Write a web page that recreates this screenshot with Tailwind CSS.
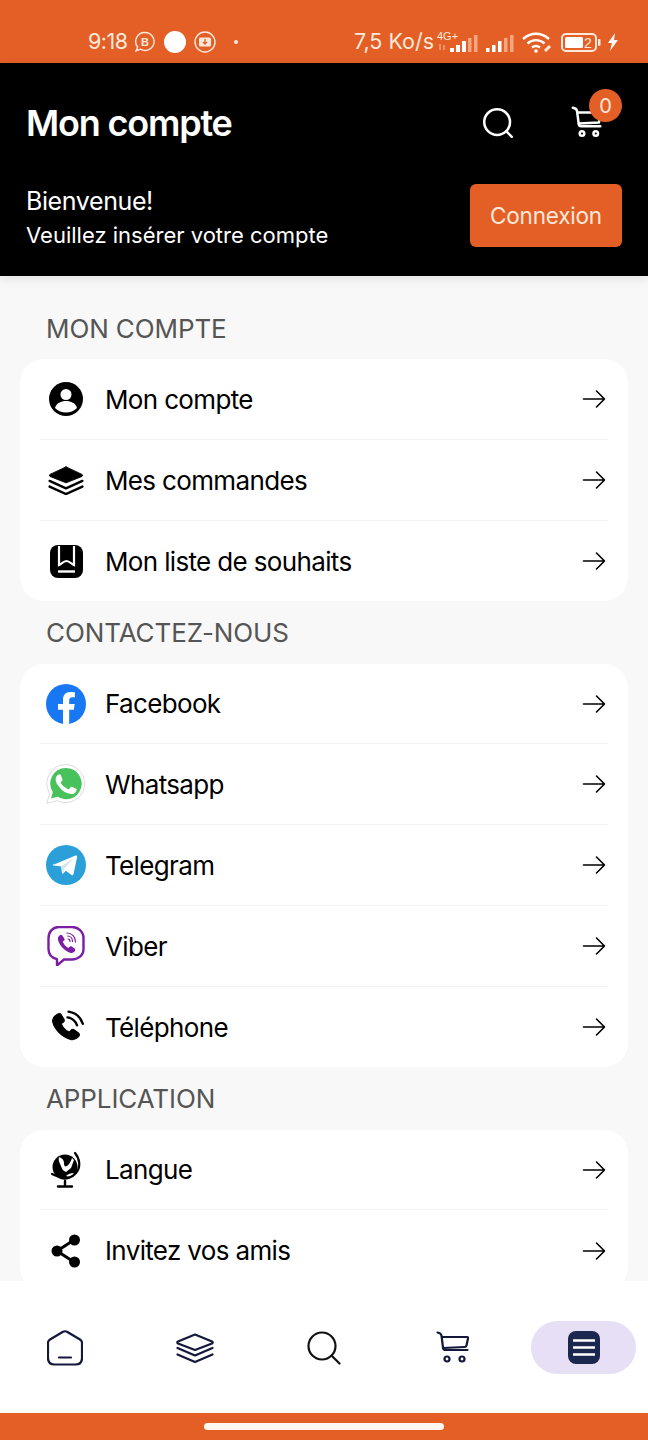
<!doctype html>
<html><head><meta charset="utf-8"><script src="https://cdn.jsdelivr.net/npm/@tailwindcss/browser@4"></script></head>
<body class="m-0">
<div class="w-[648px] h-[1440px] flex flex-col overflow-hidden bg-[#f8f8f8] font-['Inter','Liberation_Sans',sans-serif] text-black">
  <!-- status bar -->
  <div class="h-[63px] shrink-0 bg-[#e35f26] text-[#fde9dc] flex items-end pb-[9px]">
    <div class="ml-[88px] flex items-center w-[266px] h-[24px]">
      <span class="text-[21.5px] leading-none tracking-[-0.5px] w-[46px]">9:18</span>
      <svg class="w-[22px] h-[22px]" viewBox="0 0 22 22" fill="none" stroke="#fde9dc" stroke-width="1.4"><path d="M11 1.500a9 9 0 1 1-4.600 16.700L2 20l1.600-4A9 9 0 0 1 11 1.500Z"/><text x="11" y="15" font-size="11" font-weight="700" text-anchor="middle" fill="#fde9dc" stroke="none" font-family="Liberation Sans">B</text></svg>
      <span class="w-[22px] h-[22px] rounded-full bg-white ml-[8px]"></span>
      <svg class="w-[22px] h-[22px] ml-[8px]" viewBox="0 0 22 22" fill="none" stroke="#fde9dc" stroke-width="1.4"><circle cx="11" cy="11" r="10"/><rect x="5" y="6.500" width="12" height="9" rx="1.500" fill="#fde9dc" stroke="none"/><path d="M11 8v4.500M9 11l2 2 2-2" stroke="#e35f26" stroke-width="1.300"/></svg>
      <span class="w-[4px] h-[4px] rounded-full bg-[#fde9dc] ml-[18px]"></span>
    </div>
    <div class="flex items-center h-[24px]">
      <span class="text-[21.5px] leading-none tracking-[0px] w-[83px] whitespace-nowrap">7,5 Ko/s</span>
      <svg class="w-[41px] h-[24px]" viewBox="0 0 41 24"><text x="0" y="10" font-size="11" fill="#fde9dc" font-family="Liberation Sans">4G+</text><path d="M3 14v6M7 20v-5" stroke="#f5a67f" stroke-width="1.400"/><rect x="13" y="18" width="4" height="4" fill="#fff"/><rect x="19" y="15" width="4" height="7" fill="#fff"/><rect x="25" y="11" width="4" height="11" fill="#fff"/><rect x="31" y="8" width="3.500" height="14" fill="#f5a67f"/><rect x="37" y="5" width="3.500" height="17" fill="#f5a67f"/></svg>
      <svg class="w-[28px] h-[24px] ml-[8px]" viewBox="0 0 28 24"><rect x="0" y="18" width="3.500" height="4" fill="#fff"/><rect x="6" y="15" width="3.500" height="7" fill="#fff"/><rect x="12" y="11" width="3.500" height="11" fill="#fff"/><rect x="18" y="8" width="3.500" height="14" fill="#f5a67f"/><rect x="24" y="5" width="3.500" height="17" fill="#f5a67f"/></svg>
      <svg class="w-[32px] h-[24px] ml-[8px]" viewBox="0 0 32 24" fill="none" stroke="#fff" stroke-width="2.400"><path d="M1 9c8-7 18-7 26 0M5.500 13.500c5-4.500 12-4.500 17 0M10 17.500c2.500-2 5.500-2 8 0"/><circle cx="14" cy="21" r="1.800" fill="#fff" stroke="none"/><path d="M23 21l5-5" stroke="#fde9dc" stroke-width="3"/></svg>
      <svg class="w-[44px] h-[24px] ml-[7px]" viewBox="0 0 44 24" fill="none"><rect x="1" y="4" width="34" height="17" rx="4" stroke="#fde9dc" stroke-width="2"/><rect x="4" y="7" width="18" height="11" rx="1.500" fill="#fff"/><rect x="37" y="9" width="2.500" height="7" rx="1" fill="#fde9dc"/><text x="23" y="18" font-size="14" fill="#fde9dc" font-family="Liberation Sans">2</text></svg>
      <svg class="w-[12px] h-[20px] ml-[2px]" viewBox="0 0 12 20" fill="#fff"><path d="M8 1 1 11h4l-2 8 8-11H7l1-7Z"/></svg>
    </div>
  </div>
  <!-- header -->
  <header class="h-[213px] shrink-0 bg-black text-white pl-[26px] pr-[26px] flex flex-col shadow-[0_4px_10px_rgba(0,0,0,0.08)] relative z-10">
    <div class="h-[121px] pb-[2px] flex items-center justify-between">
      <h1 class="text-[36px] font-semibold tracking-[-1.2px] leading-none">Mon compte</h1>
      <div class="flex items-center">
        <svg class="w-[32px] h-[32px]" viewBox="0 0 36 36" fill="none" stroke="#fff" stroke-width="2.800" stroke-linecap="round"><circle cx="17" cy="17" r="14.500"/><path d="m27.500 27.500 6 6"/></svg>
        <div class="relative ml-[57px] mr-[18px] w-[33px] h-[33px]">
          <svg class="w-[33px] h-[33px]" viewBox="0 0 36 36" fill="none" stroke="#fff" stroke-width="2.700" stroke-linecap="round" stroke-linejoin="round"><path d="M2 2c2 .4 4 1 4.500 3l2 15c.2 1.500 1 2 2.500 2h21"/><path d="M7 7h25l-1.500 11-22 1"/><circle cx="12" cy="30" r="2.500"/><circle cx="27" cy="30" r="2.500"/></svg>
          <span class="absolute left-[18px] top-[-17px] w-[33px] h-[33px] rounded-full bg-[#e35f26] text-[#fde9dc] text-[20px] flex items-center justify-center">0</span>
        </div>
      </div>
    </div>
    <div class="flex items-start justify-between">
      <div>
        <p class="text-[25px] leading-[34px] tracking-[-0.4px]">Bienvenue!</p>
        <p class="text-[22px] leading-[34px] tracking-[0px] whitespace-nowrap">Veuillez insérer votre compte</p>
      </div>
      <button class="w-[152px] h-[63px] rounded-[6px] bg-[#e35f26] text-[#fde9dc] text-[22.5px] tracking-[-0.2px] flex items-center justify-center">Connexion</button>
    </div>
  </header>
  <!-- content -->
  <main class="flex-1 min-h-0 overflow-hidden px-[20px] pt-[36px]">
    <h2 class="h-[47px] pl-[26px] text-[26px] leading-[34px] tracking-[-0.1px] text-[#555]">MON COMPTE</h2>
    <section class="bg-white rounded-[24px] px-[20px]">
      <div class="h-[81px] flex items-center border-b border-[#f4f4f4]">
        <span class="w-[52px] flex justify-center mr-[13px]"><svg class="w-[36px] h-[36px]" viewBox="0 0 36 36"><circle cx="18" cy="18" r="17"/><circle cx="18" cy="13.500" r="5.500" fill="#fff"/><path d="M7 27c1.500-5 6-7 11-7s9.500 2 11 7c-3 3-7 4.500-11 4.500S10 30 7 27Z" fill="#fff"/></svg></span>
        <span class="flex-1 text-[26px] tracking-[-0.65px]">Mon compte</span>
        <svg class="w-[24px] h-[20px] mr-[2px]" viewBox="0 0 24 20" fill="none" stroke="#000" stroke-width="1.600" stroke-linecap="round" stroke-linejoin="round"><path d="M1.500 10h21M14.500 2l8 8-8 8"/></svg>
      </div>
      <div class="h-[81px] flex items-center border-b border-[#f4f4f4]">
        <span class="w-[52px] flex justify-center mr-[13px]"><svg class="w-[38px] h-[30px]" viewBox="0 0 38 32" fill="none" stroke="#000" stroke-width="2.500" stroke-linecap="round" stroke-linejoin="round"><path d="M19 2 36 10c1 .6 1 1.600 0 2.200L19 19 2 12.200c-1-.6-1-1.600 0-2.200L19 2Z" fill="#000" stroke-width="1"/><path d="M1.500 17 19 25l17.500-8M1.500 23 19 31l17.500-8"/></svg></span>
        <span class="flex-1 text-[26px] tracking-[-0.65px]">Mes commandes</span>
        <svg class="w-[24px] h-[20px] mr-[2px]" viewBox="0 0 24 20" fill="none" stroke="#000" stroke-width="1.600" stroke-linecap="round" stroke-linejoin="round"><path d="M1.500 10h21M14.500 2l8 8-8 8"/></svg>
      </div>
      <div class="h-[80px] flex items-center">
        <span class="w-[52px] flex justify-center mr-[13px]"><svg class="w-[33px] h-[33px]" viewBox="0 0 33 33" fill="none"><rect width="33" height="33" rx="8" fill="#000"/><path d="M9 1v19c2-1 5-4 7.500-4s5.500 3 7.500 4V1" stroke="#fff" stroke-width="2.200"/><path d="M8 26.500h17" stroke="#fff" stroke-width="2.400"/></svg></span>
        <span class="flex-1 text-[26px] tracking-[-0.65px]">Mon liste de souhaits</span>
        <svg class="w-[24px] h-[20px] mr-[2px]" viewBox="0 0 24 20" fill="none" stroke="#000" stroke-width="1.600" stroke-linecap="round" stroke-linejoin="round"><path d="M1.500 10h21M14.500 2l8 8-8 8"/></svg>
      </div>
    </section>
    <h2 class="h-[63px] pl-[26px] pt-[15px] text-[26px] leading-[34px] tracking-[-0.1px] text-[#555]">CONTACTEZ-NOUS</h2>
    <section class="bg-white rounded-[24px] px-[20px]">
      <div class="h-[80px] flex items-center border-b border-[#f4f4f4]">
        <span class="w-[52px] flex justify-center mr-[13px]"><svg class="w-[40px] h-[40px]" viewBox="0 0 40 40"><circle cx="20" cy="20" r="20" fill="#1877f2"/><path d="M27.800 25.800l.9-5.800h-5.500v-3.700c0-1.600.8-3.100 3.200-3.100h2.500V8.300s-2.300-.4-4.400-.4c-4.500 0-7.500 2.700-7.500 7.700V20h-5v5.800h5v14a20 20 0 0 0 6.200 0v-14h4.600Z" fill="#fff"/></svg></span>
        <span class="flex-1 text-[26px] tracking-[-0.65px]">Facebook</span>
        <svg class="w-[24px] h-[20px] mr-[2px]" viewBox="0 0 24 20" fill="none" stroke="#000" stroke-width="1.600" stroke-linecap="round" stroke-linejoin="round"><path d="M1.500 10h21M14.500 2l8 8-8 8"/></svg>
      </div>
      <div class="h-[81px] flex items-center border-b border-[#f4f4f4]">
        <span class="w-[52px] flex justify-center mr-[13px]"><svg class="w-[40px] h-[40px]" viewBox="0 0 40 40"><path d="M20 .6a19 19 0 0 0-16.400 28.700L.8 39.400l10.500-2.700A19 19 0 1 0 20 .6Z" fill="#fff" stroke="#dcdcdc" stroke-width="1"/><path d="M20 4a15.600 15.600 0 0 0-13.200 24l-1.800 6.600 6.800-1.800A15.600 15.600 0 1 0 20 4Z" fill="#48c35b"/><path d="M15 11.500c-.4-.9-.8-.9-1.200-.9h-1c-.4 0-.9.100-1.400.7-.5.500-1.800 1.800-1.800 4.300s1.800 5 2.100 5.300c.3.400 3.600 5.700 8.900 7.800 4.400 1.700 5.300 1.400 6.200 1.300 1-.1 3-1.200 3.400-2.400.4-1.200.4-2.200.3-2.400-.1-.2-.5-.3-1-.6l-3.600-1.800c-.5-.2-.8-.3-1.200.2l-1.600 2c-.3.400-.6.400-1.100.2-.5-.3-2.200-.8-4.200-2.600-1.600-1.400-2.600-3.100-2.900-3.600-.3-.5 0-.8.200-1l.8-.9c.2-.3.300-.5.500-.8.200-.3.100-.6 0-.9L15 11.500Z" fill="#fff"/></svg></span>
        <span class="flex-1 text-[26px] tracking-[-0.65px]">Whatsapp</span>
        <svg class="w-[24px] h-[20px] mr-[2px]" viewBox="0 0 24 20" fill="none" stroke="#000" stroke-width="1.600" stroke-linecap="round" stroke-linejoin="round"><path d="M1.500 10h21M14.500 2l8 8-8 8"/></svg>
      </div>
      <div class="h-[81px] flex items-center border-b border-[#f4f4f4]">
        <span class="w-[52px] flex justify-center mr-[13px]"><svg class="w-[40px] h-[40px]" viewBox="0 0 40 40"><circle cx="20" cy="20" r="20" fill="#2a9fd8"/><path d="M7.500 19.800 29.500 10.500c1-.4 1.900.2 1.600 1.700L27.500 29c-.3 1.200-1 1.500-2 .9l-5.600-4.100-2.700 2.600c-.6.600-1.100.3-1.200-.5l-1-6.500-7.400-.9c-1.100-.3-1.100-1.200-.1-1.700Z" fill="#fff"/><path d="M15 21.500 28 13l-9.500 10.500-1.300 5" fill="#d2e6f2"/></svg></span>
        <span class="flex-1 text-[26px] tracking-[-0.65px]">Telegram</span>
        <svg class="w-[24px] h-[20px] mr-[2px]" viewBox="0 0 24 20" fill="none" stroke="#000" stroke-width="1.600" stroke-linecap="round" stroke-linejoin="round"><path d="M1.500 10h21M14.500 2l8 8-8 8"/></svg>
      </div>
      <div class="h-[81px] flex items-center border-b border-[#f4f4f4]">
        <span class="w-[52px] flex justify-center mr-[13px]"><svg class="w-[38px] h-[40px]" viewBox="0 0 38 40" fill="none"><path d="M12 1h13c6 0 11.500 4.500 11.500 11v11c0 6.500-5.500 10.500-11.500 10.500h-8L10 39.500v-6.300C5 32 1.500 28.500 1.500 23V12C1.500 5.500 6 1 12 1Z" stroke="#7a1fa2" stroke-width="2.400" stroke-linejoin="round"/><path d="M12.500 9.500c1-.9 2.200-.8 2.800.1l2 2.800c.6.900.3 1.800-.5 2.400l-1 .8c.6 2.400 3 5.400 5.600 6.400l.9-1.100c.7-.8 1.600-.9 2.500-.3l2.700 2c1 .7 1 2 .1 3-1.300 1.300-2.900 1.800-4.600 1.100-6.300-2.700-10.300-7-12-13-.3-1.800.4-3.200 1.500-4.200Z" fill="#7a1fa2"/><path d="M20 7c4.500 0 8.500 3.500 8.500 9M20.500 10c3 0 5 2.500 5 5.500M21 13c1.500 0 2 1 2 2.500" stroke="#7a1fa2" stroke-width="1.200" stroke-linecap="round"/></svg></span>
        <span class="flex-1 text-[26px] tracking-[-0.65px]">Viber</span>
        <svg class="w-[24px] h-[20px] mr-[2px]" viewBox="0 0 24 20" fill="none" stroke="#000" stroke-width="1.600" stroke-linecap="round" stroke-linejoin="round"><path d="M1.500 10h21M14.500 2l8 8-8 8"/></svg>
      </div>
      <div class="h-[80px] flex items-center">
        <span class="w-[52px] flex justify-center mr-[13px]"><svg class="w-[34px] h-[34px] translate-x-[2px]" viewBox="0 0 32 32" fill="none"><path d="M6 4c1.400-1 2.800-.8 3.500.3l2.600 4.200c.7 1.100.4 2.200-.6 3l-1.800 1.300c1 3.300 3.800 6.300 7.600 8l1.500-1.700c.9-1 2-1.200 3.100-.4l3.900 2.800c1.200.9 1.200 2.400.2 3.500-1.800 2-4.400 3.500-7.600 2.700C9.500 25 3 17.500 1.500 11 1 8 3.500 5.500 6 4Z" fill="#000" stroke="#000" stroke-width="1"/><path d="M16.500 1.500c6.500 1 11.500 5.500 13.500 11.500M15.500 7c4 .5 7.500 3.500 9 7.500" stroke="#000" stroke-width="2.200" stroke-linecap="round"/></svg></span>
        <span class="flex-1 text-[26px] tracking-[-0.65px]">Téléphone</span>
        <svg class="w-[24px] h-[20px] mr-[2px]" viewBox="0 0 24 20" fill="none" stroke="#000" stroke-width="1.600" stroke-linecap="round" stroke-linejoin="round"><path d="M1.500 10h21M14.500 2l8 8-8 8"/></svg>
      </div>
    </section>
    <h2 class="h-[63px] pl-[26px] pt-[15px] text-[26px] leading-[34px] tracking-[-0.1px] text-[#555]">APPLICATION</h2>
    <section class="bg-white rounded-[24px] px-[20px]">
      <div class="h-[80px] flex items-center border-b border-[#f4f4f4]">
        <span class="w-[52px] flex justify-center mr-[13px]"><svg class="w-[34px] h-[38px]" viewBox="0 0 34 38" fill="none"><circle cx="16" cy="16" r="12.500" fill="#000"/><path d="M10 6c3 1 5 3 5 6s1 4 3 3 4-5 5-8l2 2-3 8-5 4c-3-1-4-3-5-6s-3-5-2-9ZM17 25c2-2 5-3 8-3-1 3-5 4-8 3Z" fill="#fff"/><path d="M26 2c5 6 6 14 1 20-4 5-11 7-17 4l-7-3" stroke="#000" stroke-width="2.200" stroke-linecap="round"/><path d="M16 30v4M9 35.500h14" stroke="#000" stroke-width="2.400" stroke-linecap="round"/></svg></span>
        <span class="flex-1 text-[26px] tracking-[-0.65px]">Langue</span>
        <svg class="w-[24px] h-[20px] mr-[2px]" viewBox="0 0 24 20" fill="none" stroke="#000" stroke-width="1.600" stroke-linecap="round" stroke-linejoin="round"><path d="M1.500 10h21M14.500 2l8 8-8 8"/></svg>
      </div>
      <div class="h-[81px] flex items-center">
        <span class="w-[52px] flex justify-center mr-[13px]"><svg class="w-[30px] h-[34px]" viewBox="0 0 30 34" fill="none"><path d="M6 17 23 6M6 17l17 11" stroke="#000" stroke-width="3"/><circle cx="6" cy="17" r="5.500" fill="#000"/><circle cx="23.500" cy="6" r="5.500" fill="#000"/><circle cx="23.500" cy="28" r="5.500" fill="#000"/></svg></span>
        <span class="flex-1 text-[26px] tracking-[-0.65px]">Invitez vos amis</span>
        <svg class="w-[24px] h-[20px] mr-[2px]" viewBox="0 0 24 20" fill="none" stroke="#000" stroke-width="1.600" stroke-linecap="round" stroke-linejoin="round"><path d="M1.500 10h21M14.500 2l8 8-8 8"/></svg>
      </div>
    </section>
  </main>
  <!-- bottom nav -->
  <nav class="h-[132px] shrink-0 bg-white grid grid-cols-[130px_129px_129px_129px_1fr] items-center justify-items-center pt-[1px]">
    <svg class="w-[36px] h-[36px]" viewBox="0 0 36 36" fill="none" stroke="#14183a" stroke-width="2.200" stroke-linecap="round" stroke-linejoin="round"><path d="M16 1.700 3 9.500c-1.300.8-2 1.800-2 3.200V28c0 4 2.500 6.500 6.500 6.500h21c4 0 6.500-2.500 6.500-6.500V12.700c0-1.400-.7-2.400-2-3.200L20 1.700c-1.500-.7-2.500-.7-4 0Z"/><path d="M12 27.500h12"/></svg>
    <svg class="w-[38px] h-[30px]" viewBox="0 0 38 30" fill="none" stroke="#14183a" stroke-width="2.200" stroke-linecap="round" stroke-linejoin="round"><path d="M19 1.500 36 8.500c1 .5 1 1.400 0 2L19 17 2 10.500c-1-.6-1-1.500 0-2L19 1.500Z"/><path d="M1.500 15 19 22.500 36.500 15M1.500 21.500 19 29l17.500-7.500"/></svg>
    <svg class="w-[34px] h-[34px]" viewBox="0 0 34 34" fill="none" stroke="#111" stroke-width="2.200" stroke-linecap="round"><circle cx="15" cy="15" r="13.500"/><path d="m25 25 7.500 7.500"/></svg>
    <svg class="w-[33px] h-[33px]" viewBox="0 0 33 33" fill="none" stroke="#14183a" stroke-width="2.200" stroke-linecap="round" stroke-linejoin="round"><path d="M1.500 1.500c2 .3 3.500 1 4 3l1.500 12c.2 1.700 1 2.500 2.500 2.500h22"/><path d="M6 6h25c1 0 1.200.6 1 1.500l-1.500 7c-.2 1-1 1.500-2 1.500L7 17"/><circle cx="11" cy="28" r="2.500"/><circle cx="26" cy="28" r="2.500"/></svg>
    <span class="ml-[2px] w-[105px] h-[53px] rounded-full bg-[#e7dff5] flex items-center justify-center"><svg class="w-[32px] h-[33px]" viewBox="0 0 32 33"><rect width="32" height="33" rx="8" fill="#1c2750"/><path d="M5 9.500h22M5 16.500h22M5 23.500h22" stroke="#fff" stroke-width="2.600"/></svg></span>
  </nav>
  <!-- gesture bar -->
  <div class="h-[27px] shrink-0 bg-[#e35f26] flex justify-center pt-[10px]"><span class="w-[240px] h-[7px] rounded-full bg-[#fff8f0]"></span></div>
</div>
</body></html>
